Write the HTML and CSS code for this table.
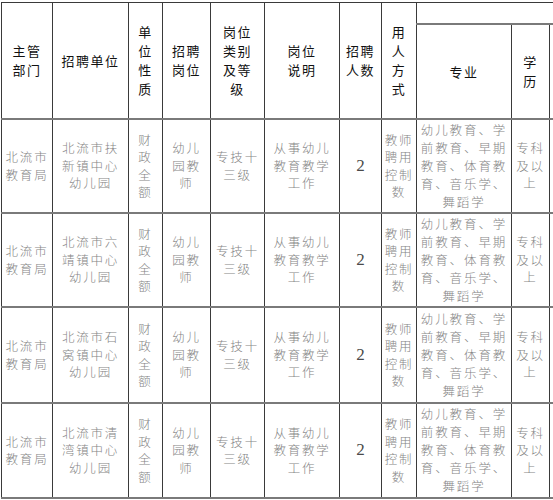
FILE: index.html
```html
<!DOCTYPE html>
<html lang="zh-CN">
<head>
<meta charset="utf-8">
<title>招聘岗位表</title>
<link rel="stylesheet" href="styles.css">
</head>
<body>
<div class="viewport">
<table class="jobs">
  <colgroup>
    <col class="c1"><col class="c2"><col class="c3"><col class="c4"><col class="c5"><col class="c6"><col class="c7"><col class="c8"><col class="c9"><col class="c10"><col class="c11">
  </colgroup>
  <thead>
    <tr class="h1">
      <th rowspan="2">主管<br>部门</th>
      <th rowspan="2">招聘单位</th>
      <th rowspan="2">单<br>位<br>性<br>质</th>
      <th rowspan="2">招聘<br>岗位</th>
      <th rowspan="2">岗位<br>类别<br>及等<br>级</th>
      <th rowspan="2">岗位<br>说明</th>
      <th rowspan="2">招聘<br>人数</th>
      <th rowspan="2">用<br>人<br>方<br>式</th>
      <th colspan="3" class="group"></th>
    </tr>
    <tr class="h2">
      <th>专业</th>
      <th>学<br>历</th>
      <th></th>
    </tr>
  </thead>
  <tbody>
    <tr class="r1">
      <td>北流市<br>教育局</td>
      <td>北流市扶<br>新镇中心<br>幼儿园</td>
      <td>财<br>政<br>全<br>额</td>
      <td>幼儿<br>园教<br>师</td>
      <td>专技十<br>三级</td>
      <td>从事幼儿<br>教育教学<br>工作</td>
      <td class="num">2</td>
      <td>教师<br>聘用<br>控制<br>数</td>
      <td class="major">幼儿教育、学<br>前教育、早期<br>教育、体育教<br>育、音乐学、<br>舞蹈学</td>
      <td>专科<br>及以<br>上</td>
      <td></td>
    </tr>
    <tr class="r2">
      <td>北流市<br>教育局</td>
      <td>北流市六<br>靖镇中心<br>幼儿园</td>
      <td>财<br>政<br>全<br>额</td>
      <td>幼儿<br>园教<br>师</td>
      <td>专技十<br>三级</td>
      <td>从事幼儿<br>教育教学<br>工作</td>
      <td class="num">2</td>
      <td>教师<br>聘用<br>控制<br>数</td>
      <td class="major">幼儿教育、学<br>前教育、早期<br>教育、体育教<br>育、音乐学、<br>舞蹈学</td>
      <td>专科<br>及以<br>上</td>
      <td></td>
    </tr>
    <tr class="r3">
      <td>北流市<br>教育局</td>
      <td>北流市石<br>窝镇中心<br>幼儿园</td>
      <td>财<br>政<br>全<br>额</td>
      <td>幼儿<br>园教<br>师</td>
      <td>专技十<br>三级</td>
      <td>从事幼儿<br>教育教学<br>工作</td>
      <td class="num">2</td>
      <td>教师<br>聘用<br>控制<br>数</td>
      <td class="major">幼儿教育、学<br>前教育、早期<br>教育、体育教<br>育、音乐学、<br>舞蹈学</td>
      <td>专科<br>及以<br>上</td>
      <td></td>
    </tr>
    <tr class="r4">
      <td>北流市<br>教育局</td>
      <td>北流市清<br>湾镇中心<br>幼儿园</td>
      <td>财<br>政<br>全<br>额</td>
      <td>幼儿<br>园教<br>师</td>
      <td>专技十<br>三级</td>
      <td>从事幼儿<br>教育教学<br>工作</td>
      <td class="num">2</td>
      <td>教师<br>聘用<br>控制<br>数</td>
      <td class="major">幼儿教育、学<br>前教育、早期<br>教育、体育教<br>育、音乐学、<br>舞蹈学</td>
      <td>专科<br>及以<br>上</td>
      <td></td>
    </tr>
  </tbody>
</table>
</div>
</body>
</html>
```
FILE: styles.css
```css
html, body {
  margin: 0;
  padding: 0;
  background: #ffffff;
}

.viewport {
  width: 553px;
  height: 500px;
  overflow: hidden;
  padding: 2px 0 0 1px;
  box-sizing: border-box;
}

.jobs {
  border-collapse: collapse;
  table-layout: fixed;
  width: 608px;
  font-family: "Noto Sans CJK SC", "Noto Sans", sans-serif;
}

.c1 { width: 51px; }
.c2 { width: 76px; }
.c3 { width: 34px; }
.c4 { width: 48px; }
.c5 { width: 54px; }
.c6 { width: 75px; }
.c7 { width: 42px; }
.c8 { width: 35px; }
.c9 { width: 95px; }
.c10 { width: 38px; }
.c11 { width: 60px; }

.jobs th,
.jobs td {
  border-left: 1px solid #3a3a3a;
  border-right: 1px solid #3a3a3a;
  border-top: 2px solid #7a7a7a;
  border-bottom: 2px solid #7a7a7a;
  padding: 0;
  text-align: center;
  vertical-align: middle;
  overflow: hidden;
  white-space: nowrap;
}

.jobs th {
  font-size: 13px;
  line-height: 19px;
  letter-spacing: 1.5px;
  font-weight: 400;
  color: #111111;
}

.jobs thead tr:first-child th {
  border-top: 1px solid #3a3a3a;
}

.jobs .h1 { height: 21px; }
.jobs .h2 { height: 95px; }

.jobs td {
  font-size: 12.5px;
  line-height: 17.5px;
  letter-spacing: 1.8px;
  font-weight: 300;
  color: #858585;
}

.jobs tr.r1 td { height: 92px; }
.jobs tr.r2 td { height: 92px; }
.jobs tr.r3 td { height: 94px; }
.jobs tr.r4 td { height: 93px; }

.jobs td.major {
  line-height: 18px;
  letter-spacing: 1.9px;
}

.jobs td.num {
  font-family: "Liberation Serif", "DejaVu Serif", serif;
  font-size: 17px;
  font-weight: 400;
  letter-spacing: 0;
  color: #4a4a4a;
}
```
